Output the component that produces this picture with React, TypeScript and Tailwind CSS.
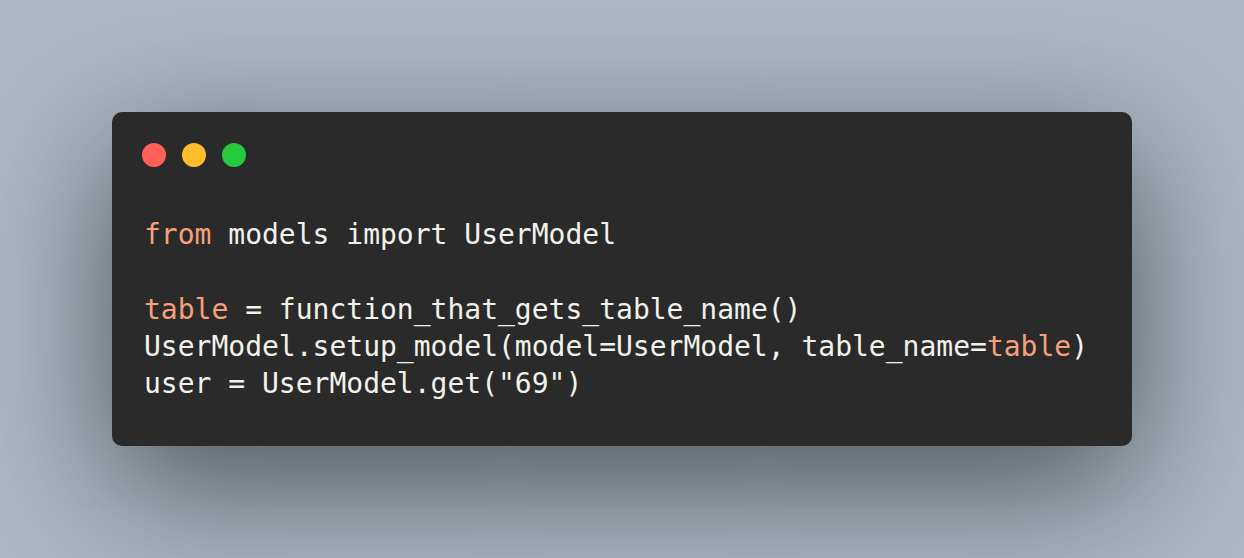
const lines: { text: string; kw?: boolean }[][] = [
  [{ text: "from", kw: true }, { text: " models import UserModel" }],
  [{ text: "" }],
  [{ text: "table", kw: true }, { text: " = function_that_gets_table_name()" }],
  [
    { text: "UserModel.setup_model(model=UserModel, table_name=" },
    { text: "table", kw: true },
    { text: ")" },
  ],
  [{ text: 'user = UserModel.get("69")' }],
];

export default function App() {
  return (
    <div className="w-[1244px] h-[558px] bg-[#abb8c3] p-[112px] flex">
      <div className="w-full rounded-[10px] bg-[#2a2a2a] shadow-[0_40px_136px_rgba(0,0,0,0.55)] flex flex-col">
        {/* window controls */}
        <div className="flex gap-4 pt-[31px] pl-[30px]">
          <span className="w-6 h-6 rounded-full bg-[#ff5f56]" />
          <span className="w-6 h-6 rounded-full bg-[#ffbd2e]" />
          <span className="w-6 h-6 rounded-full bg-[#27c93f]" />
        </div>
        <pre className="mt-[49px] pl-[32px] text-[28px] leading-[37.33px] text-[#f2f2ec] font-['DejaVu_Sans_Mono',monospace] antialiased">
          {lines.map((line, i) => (
            <div key={i} className="h-[37.33px]">
              {line.map((tok, j) => (
                <span key={j} className={tok.kw ? "text-[#f7a07b]" : undefined}>
                  {tok.text}
                </span>
              ))}
            </div>
          ))}
        </pre>
      </div>
    </div>
  );
}
